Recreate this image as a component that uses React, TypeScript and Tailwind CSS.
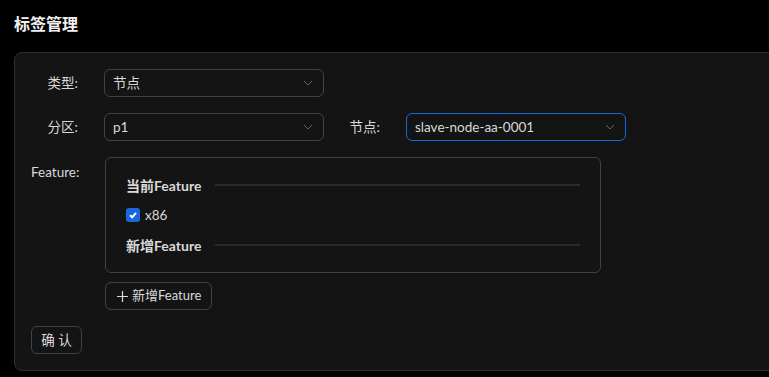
import React from 'react';

const font = { fontFamily: 'Lato, "Noto Sans CJK SC", sans-serif' };

const Chevron = () => (
  <svg width="10" height="6" viewBox="0 0 10 6" className="shrink-0">
    <path d="M1 1 L5 5 L9 1" fill="none" stroke="#636363" strokeWidth="1" />
  </svg>
);

const Select = ({ value, focused }: { value: string; focused?: boolean }) => (
  <div
    className={`w-[220px] h-[28px] rounded-[6px] border flex items-center justify-between pl-[8px] pr-[10px] text-[13.5px] text-[#d9d9d9] ${
      focused ? 'border-[#1668dc]' : 'border-[#424242]'
    }`}
  >
    <span>{value}</span>
    <Chevron />
  </div>
);

const Label = ({ text, w = 'w-[73px]' }: { text: string; w?: string }) => (
  <div className={`${w} shrink-0 text-right pr-[26px] text-[13.5px] text-[#d9d9d9] whitespace-nowrap`}>
    {text}:
  </div>
);

const SectionTitle = ({ text }: { text: string }) => (
  <div className="flex items-center h-[22px]">
    <span className="text-[14px] font-bold text-[#d9d9d9] whitespace-nowrap">{text}</span>
    <div className="flex-1 h-[2px] bg-[#2a2a2a] ml-[14px]" />
  </div>
);

const App = () => {
  return (
    <div className="min-h-screen bg-black text-white overflow-hidden pt-[12px] pl-[14px]" style={font}>
      {/* Header */}
      <h1 className="text-[16px] leading-[24px] font-bold text-[#f0f0f0]">标签管理</h1>

      {/* Card */}
      <div className="mt-[16px] w-[1000px] bg-[#141414] border border-[#303030] rounded-[8px] pt-[16px] pb-[16px] pl-[16px]">
        {/* 类型 */}
        <div className="flex items-center mb-[16px]">
          <Label text="类型" />
          <Select value="节点" />
        </div>

        {/* 分区 / 节点 */}
        <div className="flex items-center mb-[16px]">
          <Label text="分区" />
          <Select value="p1" />
          <Label text="节点" w="w-[82px]" />
          <Select value="slave-node-aa-0001" focused />
        </div>

        {/* Feature */}
        <div className="flex items-start">
          <div className="w-[74px] shrink-0 text-right pr-[27px] text-[13.5px] text-[#d9d9d9] pt-[5px]">
            Feature:
          </div>
          <div>
            <div className="w-[496px] border border-[#424242] rounded-[6px] px-[20px] pt-[16px] pb-[16px]">
              <SectionTitle text="当前Feature" />
              <div className="flex items-center h-[22px] mt-[8px]">
                <div className="w-[14px] h-[14px] rounded-[3px] bg-[#1668dc] flex items-center justify-center">
                  <svg width="10" height="10" viewBox="0 0 10 10">
                    <path d="M2 5.2 L4.2 7.3 L8 2.8" fill="none" stroke="white" strokeWidth="2" />
                  </svg>
                </div>
                <span className="ml-[5px] text-[13.5px] text-[#d9d9d9]">x86</span>
              </div>
              <div className="mt-[8px]">
                <SectionTitle text="新增Feature" />
              </div>
            </div>
            <button className="mt-[9px] h-[28px] pl-[11px] pr-[10px] flex items-center gap-[4px] border border-[#424242] rounded-[6px] text-[13px] text-[#d9d9d9]">
              <svg width="11" height="11" viewBox="0 0 11 11">
                <path d="M5.5 0 V11 M0 5.5 H11" stroke="#d9d9d9" strokeWidth="1.2" />
              </svg>
              新增Feature
            </button>
          </div>
        </div>

        {/* Confirm */}
        <button className="mt-[16px] h-[28px] w-[51px] border border-[#424242] rounded-[6px] text-[13.5px] text-[#d9d9d9]">
          确 认
        </button>
      </div>
    </div>
  );
};

export default App;
